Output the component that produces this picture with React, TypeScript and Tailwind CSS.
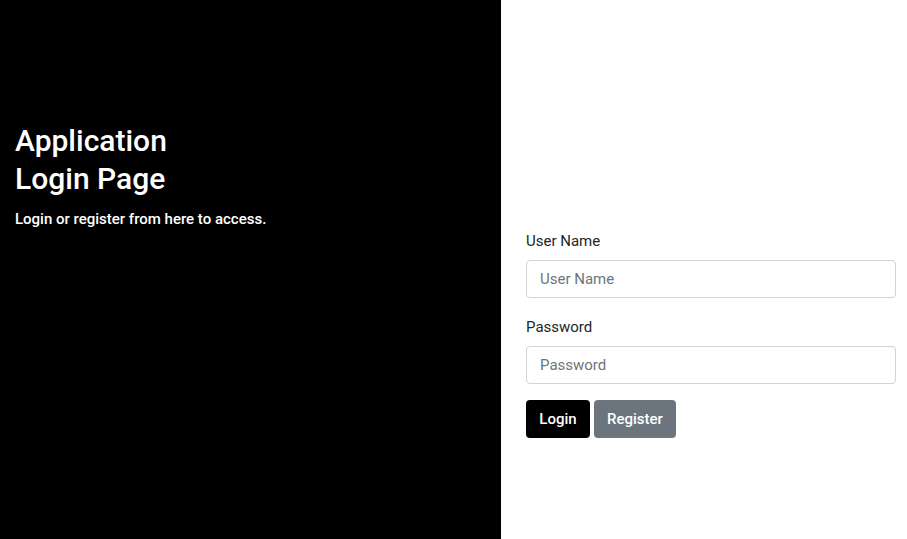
import { useState } from "react";

const App = () => {
  const [userName, setUserName] = useState("");
  const [password, setPassword] = useState("");

  return (
    <div className="flex h-[539px] w-full font-['Roboto','Liberation_Sans',Arial,sans-serif]">
      {/* Left side - title */}
      <div className="w-[501px] shrink-0 bg-black px-[15px] pt-[122px] text-white">
        <h2 className="text-[30px] font-medium leading-[38.4px]">
          Application
          <br />
          Login Page
        </h2>
        <p className="mt-[9px] text-[15px] font-medium leading-[1.5]">
          Login or register from here to access.
        </p>
      </div>

      {/* Right side - form */}
      <div className="flex-1 bg-white pl-[25px] pr-[11px] pt-[230px] text-[#212529]">
        <form onSubmit={(e) => e.preventDefault()}>
          <div className="mb-[18px]">
            <label className="mb-[7px] block text-[15px] leading-[1.5]">User Name</label>
            <input
              type="text"
              value={userName}
              onChange={(e) => setUserName(e.target.value)}
              placeholder="User Name"
              className="block h-[38px] w-full rounded-[4px] border border-[#ced4da] px-[13px] text-[15px] placeholder:text-[#6c757d] focus:outline-none"
            />
          </div>
          <div className="mb-[16px]">
            <label className="mb-[8px] block text-[15px] leading-[1.5]">Password</label>
            <input
              type="password"
              value={password}
              onChange={(e) => setPassword(e.target.value)}
              placeholder="Password"
              className="block h-[38px] w-full rounded-[4px] border border-[#ced4da] px-[13px] text-[15px] placeholder:text-[#6c757d] focus:outline-none"
            />
          </div>
          <div className="flex gap-[4px]">
            <button
              type="submit"
              className="h-[38px] w-[64px] rounded-[4px] bg-black text-[15px] font-medium text-white"
            >
              Login
            </button>
            <button
              type="button"
              className="h-[38px] w-[82px] rounded-[4px] bg-[#6c757d] text-[15px] font-medium text-white"
            >
              Register
            </button>
          </div>
        </form>
      </div>
    </div>
  );
};

export default App;
